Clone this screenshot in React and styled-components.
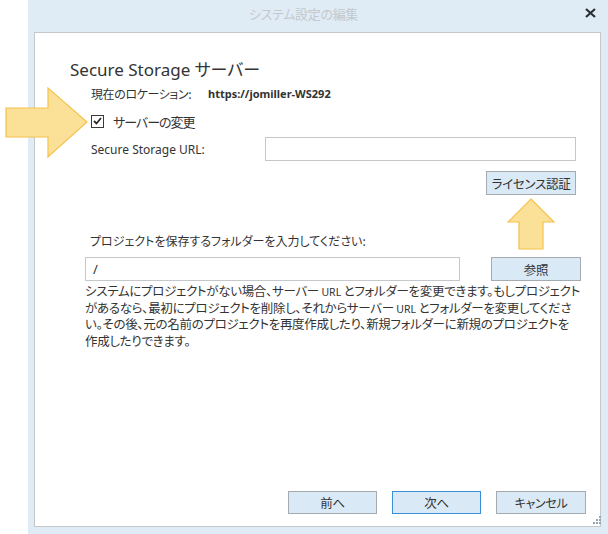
import React from "react";
import styled, { createGlobalStyle } from "styled-components";

const Global = createGlobalStyle`
  html, body { margin: 0; padding: 0; background: #ffffff; }
  body { font-family: "Noto Sans", "Noto Sans CJK JP", sans-serif; color: #2e2e2e; }
  * { box-sizing: border-box; }
`;

const Page = styled.div`
  position: relative;
  width: 608px;
  height: 534px;
  display: flex;
  overflow: hidden;
`;

const Gutter = styled.div`
  width: 28px;
  flex: none;
  background: #ffffff;
`;

const Dialog = styled.div`
  position: relative;
  flex: 1;
  min-width: 0;
  display: flex;
  flex-direction: column;
  background: #e0ecf5;
  padding: 0 7px 7px 6px;
`;

const TitleBar = styled.div`
  position: relative;
  height: 32px;
  flex: none;
  display: flex;
  align-items: center;
  justify-content: center;
  padding-bottom: 6px;
  padding-right: 28px;
  font-family: "Noto Sans CJK JP", sans-serif;
  font-feature-settings: "palt";
  font-size: 13px;
  letter-spacing: -0.3px;
  color: #c3c8cc;
`;

const Close = styled.div`
  position: absolute;
  right: 4px;
  top: 6px;
  width: 14px;
  height: 14px;
  display: flex;
  align-items: center;
  justify-content: center;
`;

const Panel = styled.div`
  flex: 1;
  min-width: 0;
  display: flex;
  flex-direction: column;
  background: #ffffff;
  border: 1px solid #c4c8cb;
  padding: 25px 24px 12px 50px;
`;

const Heading = styled.div`
  margin-left: -15px;
  font-family: "Noto Sans", "Noto Sans CJK JP", sans-serif;
  font-feature-settings: "palt";
  font-size: 17px;
  line-height: 24px;
  color: #333;
  white-space: nowrap;
`;

const Text = styled.span`
  font-family: "Noto Sans CJK JP", sans-serif;
  font-feature-settings: "palt";
  font-size: ${(p) => p.$size || 12}px;
  letter-spacing: ${(p) => p.$ls || 0}px;
  color: #333;
  white-space: nowrap;
`;

const Latin = styled.span`
  font-family: "Noto Sans", sans-serif;
  font-size: ${(p) => p.$size || 12}px;
  font-weight: ${(p) => (p.$bold ? 700 : 400)};
  color: #333;
  white-space: nowrap;
`;

const LocationRow = styled.div`
  margin-top: 2px;
  margin-left: 6px;
  height: 18px;
  display: flex;
  align-items: center;
`;

const LocLabel = styled.div`
  width: 117px;
  flex: none;
  display: flex;
  align-items: center;
`;

const CheckRow = styled.label`
  margin-top: 9px;
  margin-left: 6px;
  height: 20px;
  display: flex;
  align-items: center;
  gap: 9px;
`;

const Box = styled.span`
  width: 13px;
  height: 13px;
  border: 1px solid #3a3a3a;
  display: flex;
  align-items: center;
  justify-content: center;
  background: #fff;
`;

const UrlRow = styled.div`
  margin-top: 6px;
  margin-left: 6px;
  height: 24px;
  display: flex;
  align-items: center;
  justify-content: space-between;
`;

const Input = styled.div`
  width: ${(p) => p.$w}px;
  height: ${(p) => p.$h || 24}px;
  flex: none;
  border: 1px solid #c4c8cb;
  background: #fff;
  display: flex;
  align-items: center;
  padding-left: 7px;
  font-family: "Noto Sans", sans-serif;
  font-size: 13px;
  color: #333;
`;

const Button = styled.div`
  width: ${(p) => p.$w || 90}px;
  height: ${(p) => p.$h || 24}px;
  flex: none;
  display: flex;
  align-items: center;
  justify-content: center;
  white-space: nowrap;
  background: #dae9f6;
  border: 1px solid ${(p) => (p.$primary ? "#3b8fd8" : "#a5abb0")};
  font-family: "Noto Sans CJK JP", sans-serif;
  font-feature-settings: "palt";
  font-size: ${(p) => p.$size || 12.5}px;
  letter-spacing: -0.3px;
  color: #333;
`;

const LicenseRow = styled.div`
  margin-top: 10px;
  display: flex;
  justify-content: flex-end;
`;

const FolderLabel = styled.div`
  margin-top: 36px;
  margin-left: 5px;
  height: 18px;
  display: flex;
  align-items: center;
`;

const FolderRow = styled.div`
  margin-top: 8px;
  margin-right: -5px;
  display: flex;
  align-items: center;
  gap: 31px;
`;

const Desc = styled.div`
  margin-top: 2px;
  display: flex;
  flex-direction: column;
`;

const DescLine = styled.div`
  height: 16.7px;
  line-height: 16.7px;
  font-family: "Noto Sans CJK JP", sans-serif;
  font-feature-settings: "palt";
  font-size: 12.5px;
  letter-spacing: -0.3px;
  color: #333;
  white-space: nowrap;
`;

const Small = styled.span`
  font-family: "Noto Sans", sans-serif;
  font-size: 10.5px;
  letter-spacing: 0;
`;

const Footer = styled.div`
  margin-top: auto;
  margin-right: -10px;
  display: flex;
  justify-content: flex-end;
  gap: 15px;
`;

const Overlay = styled.svg`
  position: absolute;
  left: ${(p) => p.$x}px;
  top: ${(p) => p.$y}px;
  pointer-events: none;
`;

const Grip = styled.svg`
  position: absolute;
  right: 7px;
  bottom: 10px;
`;

export default function App() {
  return (
    <>
      <Global />
      <Page>
        <Gutter />
        <Dialog>
          <TitleBar>
            システム設定の編集
            <Close>
              <svg width="11" height="10" viewBox="0 0 11 10">
                <path d="M1 1 L10 9 M10 1 L1 9" stroke="#2b2f33" strokeWidth="2.2" />
              </svg>
            </Close>
          </TitleBar>
          <Panel>
            <Heading>Secure Storage サーバー</Heading>
            <LocationRow>
              <LocLabel>
                <Text $size={12} $ls={-0.4}>現在のロケーション:</Text>
              </LocLabel>
              <Latin $bold $size={11}>https://jomiller-WS292</Latin>
            </LocationRow>
            <CheckRow>
              <Box>
                <svg width="9" height="8" viewBox="0 0 9 8">
                  <path d="M1 4 L3.5 6.5 L8 1" stroke="#2b2b2b" strokeWidth="1.8" fill="none" />
                </svg>
              </Box>
              <Text $size={13} $ls={-1}>サーバーの変更</Text>
            </CheckRow>
            <UrlRow>
              <Latin $size={12}>Secure Storage URL:</Latin>
              <Input $w={311} />
            </UrlRow>
            <LicenseRow>
              <Button $w={90}>ライセンス認証</Button>
            </LicenseRow>
            <FolderLabel>
              <Text $size={12}>プロジェクトを保存するフォルダーを入力してください:</Text>
            </FolderLabel>
            <FolderRow>
              <Input $w={375}>/</Input>
              <Button $w={90}>参照</Button>
            </FolderRow>
            <Desc>
              <DescLine>
                システムにプロジェクトがない場合、サーバー <Small>URL</Small> とフォルダーを変更できます。もしプロジェクト
              </DescLine>
              <DescLine>
                があるなら、最初にプロジェクトを削除し、それからサーバー <Small>URL</Small> とフォルダーを変更してくださ
              </DescLine>
              <DescLine>い。その後、元の名前のプロジェクトを再度作成したり、新規フォルダーに新規のプロジェクトを</DescLine>
              <DescLine>作成したりできます。</DescLine>
            </Desc>
            <Footer>
              <Button $w={89} $h={23}>前へ</Button>
              <Button $w={89} $h={23} $primary>次へ</Button>
              <Button $w={90} $h={23} $size={12}>キャンセル</Button>
            </Footer>
          </Panel>
          <Grip width="8" height="8" viewBox="0 0 8 8">
            <g fill="#9aa3aa">
              <rect x="6" y="0" width="2" height="2" />
              <rect x="3" y="3" width="2" height="2" />
              <rect x="6" y="3" width="2" height="2" />
              <rect x="0" y="6" width="2" height="2" />
              <rect x="3" y="6" width="2" height="2" />
              <rect x="6" y="6" width="2" height="2" />
            </g>
          </Grip>
        </Dialog>
        <Overlay $x={4} $y={86} width="86" height="74" viewBox="0 0 86 74">
          <path
            d="M2 22 L44 22 L44 2 L83 36 L44 71 L44 51 L2 51 Z"
            fill="#fbe197"
            stroke="#f5c24d"
            strokeWidth="1.2"
          />
        </Overlay>
        <Overlay $x={505} $y={197} width="52" height="54" viewBox="0 0 52 54">
          <path
            d="M26 2 L49 25 L38 25 L38 52 L14 52 L14 25 L3 25 Z"
            fill="#fbe197"
            stroke="#f5c24d"
            strokeWidth="1.2"
          />
        </Overlay>
      </Page>
    </>
  );
}
